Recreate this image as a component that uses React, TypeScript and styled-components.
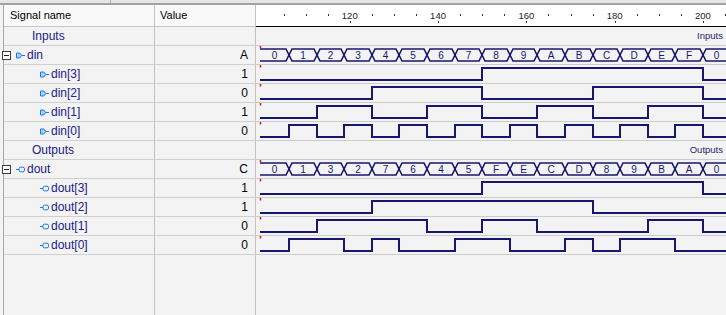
import React from "react";
import styled, { createGlobalStyle } from "styled-components";

const GlobalStyle = createGlobalStyle`
  html, body {
    margin: 0;
    padding: 0;
    background: #f3f3f3;
  }
  body {
    font-family: "Liberation Sans", Arial, sans-serif;
    overflow: hidden;
  }
`;

const NAVY = "#17176e";
const WAVE_W = 470;
const ROW_H = 18;
const X0 = 5.45; // time 100 inside the wave pane
const STEP = 27.6; // one count = 6.25 time units
const PX_PER_UNIT = 4.415;
const WS = 4; // where drawing starts
const TOP = 3;
const BOT = 15;
const MID = 9;
const D = 3;

const xAt = (k: number) => Math.round(X0 + k * STEP);
const xTime = (t: number) => X0 + (t - 100) * PX_PER_UNIT;

const Window = styled.div`
    width: 726px;
    height: 315px;
    display: flex;
    flex-direction: column;
    overflow: hidden;
    background: #f3f3f3;
`;

const TopStrip = styled.div`
    height: 3px;
    display: flex;
    background: #e6e6e6;
    border-bottom: 2px solid #a2a2a2;
`;

const StripTab = styled.div<{ $w: number }>`
    width: ${p => p.$w}px;
    border-right: 1px solid #b4b4b4;
`;

const Grid = styled.div`
    flex: 1;
    margin-left: 3px;
    border-left: 1px solid #a9a9a9;
    display: grid;
    grid-template-columns: 151px 101px 470px;
    grid-template-rows: 22px repeat(12, 19px) 1fr;
`;

const HeaderCell = styled.div<{ $pad: number }>`
    box-sizing: border-box;
    padding-left: ${p => p.$pad}px;
    background: #f9f9f9;
    border-right: 1px solid #c2c2c2;
    border-bottom: 1px solid #c6c6c6;
    font-size: 11px;
    line-height: 21px;
    color: #000;
    white-space: nowrap;
`;

const Ruler = styled.div`
    background: #ffffff;
    border-bottom: 1px solid #000;
`;

const NameCell = styled.div<{ $indent: number }>`
    box-sizing: border-box;
    display: flex;
    align-items: center;
    padding-left: ${p => p.$indent}px;
    border-right: 1px solid #c2c2c2;
    border-bottom: 1px solid #d0d0d0;
    font-size: 12px;
    color: #20208a;
    white-space: nowrap;
`;

const ValueCell = styled.div`
    box-sizing: border-box;
    padding-right: 7px;
    text-align: right;
    border-right: 1px solid #c2c2c2;
    border-bottom: 1px solid #d0d0d0;
    font-size: 12px;
    line-height: 18px;
    color: #000;
`;

const WaveCell = styled.div`
    box-sizing: border-box;
    border-bottom: 1px solid #cbcbcb;
    overflow: hidden;
`;

const SectionTag = styled.div`
    height: 18px;
    line-height: 18px;
    padding-right: 3px;
    text-align: right;
    font-size: 9.5px;
    color: #1f1f70;
`;

const FillCell = styled.div<{ $divider: boolean }>`
    border-right: ${p => (p.$divider ? "1px solid #c2c2c2" : "none")};
`;

const ExpandBox = styled.span`
    box-sizing: border-box;
    width: 9px;
    height: 9px;
    margin-left: -2px;
    margin-right: 5px;
    border: 1px solid #3c3c3c;
    background: #fff;
    display: flex;
    align-items: center;
    justify-content: center;
    &::after {
        content: "";
        width: 5px;
        height: 1px;
        background: #222;
    }
`;

const Label = styled.span<{ $gap: number }>`
    margin-left: ${p => p.$gap}px;
    line-height: 18px;
`;

const InIcon = () => (
  <svg width="9" height="7" viewBox="0 0 9 7" style={{ display: "block" }}>
    <path d="M0.5 1 H3.8 L5.8 3.5 L3.8 6 H0.5 Z" fill="#9fd0ff" stroke="#1f78e0" strokeWidth="1" />
    <line x1="5.8" y1="3.5" x2="9" y2="3.5" stroke="#1f78e0" strokeWidth="1" />
  </svg>
);

const OutIcon = () => (
  <svg width="9" height="7" viewBox="0 0 9 7" style={{ display: "block" }}>
    <line x1="0" y1="3.5" x2="3" y2="3.5" stroke="#1f78e0" strokeWidth="1" />
    <rect x="3" y="1.2" width="5.5" height="4.6" rx="1.5" fill="#e8f4ff" stroke="#1f78e0" strokeWidth="1" />
  </svg>
);

type Row =
  | { kind: "section"; label: string }
  | { kind: "bus"; name: string; dir: "in" | "out"; value: string; data: number[] }
  | { kind: "bit"; name: string; dir: "in" | "out"; value: string; bits: number[] };

const counts = Array.from({ length: 17 }, (_, k) => k % 16);
// output is the gray-to-binary conversion of the input
const decoded = counts.map(g => g ^ (g >> 1) ^ (g >> 2) ^ (g >> 3));

const ROWS: Row[] = [
  { kind: "section", label: "Inputs" },
  { kind: "bus", name: "din", dir: "in", value: "A", data: counts },
  ...[3, 2, 1, 0].map(b => ({
    kind: "bit" as const,
    name: `din[${b}]`,
    dir: "in" as const,
    value: String((0xa >> b) & 1),
    bits: counts.map(v => (v >> b) & 1),
  })),
  { kind: "section", label: "Outputs" },
  { kind: "bus", name: "dout", dir: "out", value: "C", data: decoded },
  ...[3, 2, 1, 0].map(b => ({
    kind: "bit" as const,
    name: `dout[${b}]`,
    dir: "out" as const,
    value: String((0xc >> b) & 1),
    bits: decoded.map(v => (v >> b) & 1),
  })),
];

const Marker = () => <line x1={WS + 0.5} y1={0} x2={WS + 0.5} y2={2.5} stroke="#e01818" strokeWidth={1.5} />;

const BitWave = ({ bits }: { bits: number[] }) => {
  const y = (b: number) => (b ? TOP : BOT);
  let d = `M ${WS} ${y(bits[0])}`;
  for (let k = 1; k < bits.length; k++) {
    if (bits[k] !== bits[k - 1]) d += ` H ${xAt(k)} V ${y(bits[k])}`;
  }
  d += ` H ${WAVE_W + 2}`;
  return (
    <svg width={WAVE_W} height={ROW_H} style={{ display: "block" }}>
      <path d={d} fill="none" stroke={NAVY} strokeWidth={2} />
      <Marker />
    </svg>
  );
};

const BusWave = ({ data }: { data: number[] }) => {
  let a = `M ${WS} ${TOP}`;
  let b = `M ${WS} ${BOT}`;
  let onTop = true;
  for (let k = 1; k < data.length; k++) {
    const xk = xAt(k);
    const ya = onTop ? TOP : BOT;
    const yb = onTop ? BOT : TOP;
    a += ` L ${xk - D} ${ya} L ${xk + D} ${yb}`;
    b += ` L ${xk - D} ${yb} L ${xk + D} ${ya}`;
    onTop = !onTop;
  }
  a += ` L ${WAVE_W + 2} ${onTop ? TOP : BOT}`;
  b += ` L ${WAVE_W + 2} ${onTop ? BOT : TOP}`;
  const bounds = [WS, ...data.slice(1).map((_, i) => xAt(i + 1)), WAVE_W + 4];
  return (
    <svg width={WAVE_W} height={ROW_H} style={{ display: "block" }}>
      <path d={a} fill="none" stroke={NAVY} strokeWidth={1.6} />
      <path d={b} fill="none" stroke={NAVY} strokeWidth={1.6} />
      {data.map((v, i) => (
        <text
          key={i}
          x={(bounds[i] + bounds[i + 1]) / 2}
          y={MID + 3.6}
          textAnchor="middle"
          fontSize="10"
          fontFamily='"Liberation Sans", Arial, sans-serif'
          fill={NAVY}
        >
          {v.toString(16).toUpperCase()}
        </text>
      ))}
      <Marker />
    </svg>
  );
};

const RulerScale = () => {
  const majors = [120, 140, 160, 180, 200];
  const minors: number[] = [];
  for (let t = 105; t <= 205; t += 5) if (t % 20 !== 0) minors.push(t);
  return (
    <svg width={WAVE_W} height={21} style={{ display: "block" }}>
      {minors.map(t => (
        <rect key={t} x={Math.round(xTime(t))} y={9} width={1} height={2} fill="#333" />
      ))}
      {majors.map(t => (
        <g key={t}>
          <text
            x={xTime(t)}
            y={14}
            textAnchor="middle"
            fontSize="9.5"
            fontFamily='"Liberation Sans", Arial, sans-serif'
            fill="#222"
          >
            {t}
          </text>
          <rect x={Math.round(xTime(t))} y={16} width={1} height={2} fill="#333" />
        </g>
      ))}
    </svg>
  );
};

const SignalName = ({ row }: { row: Exclude<Row, { kind: "section" }> }) => {
  const parent = row.kind === "bus";
  return (
    <NameCell $indent={parent ? 0 : 36}>
      {parent && <ExpandBox />}
      {row.dir === "in" ? <InIcon /> : <OutIcon />}
      <Label $gap={row.dir === "in" ? 2 : 2}>{row.name}</Label>
    </NameCell>
  );
};

export default function App() {
  return (
    <Window>
      <GlobalStyle />
      <TopStrip>
        <StripTab $w={110} />
      </TopStrip>
      <Grid>
        <HeaderCell $pad={6}>Signal name</HeaderCell>
        <HeaderCell $pad={5}>Value</HeaderCell>
        <Ruler>
          <RulerScale />
        </Ruler>
        {ROWS.map((row, i) =>
          row.kind === "section" ? (
            <React.Fragment key={i}>
              <NameCell $indent={28}>
                <Label $gap={0}>{row.label}</Label>
              </NameCell>
              <ValueCell />
              <WaveCell>
                <SectionTag>{row.label}</SectionTag>
              </WaveCell>
            </React.Fragment>
          ) : (
            <React.Fragment key={i}>
              <SignalName row={row} />
              <ValueCell>{row.value}</ValueCell>
              <WaveCell>
                {row.kind === "bus" ? <BusWave data={row.data} /> : <BitWave bits={row.bits} />}
              </WaveCell>
            </React.Fragment>
          )
        )}
        <FillCell $divider />
        <FillCell $divider />
        <FillCell $divider={false} />
      </Grid>
    </Window>
  );
}
